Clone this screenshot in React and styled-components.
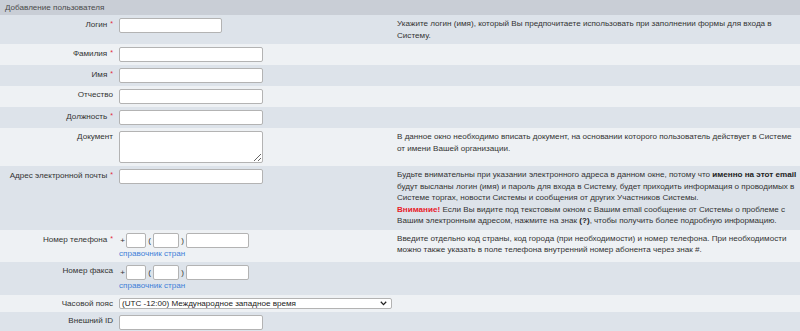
import React from 'react';
import styled, { createGlobalStyle } from 'styled-components';

const GlobalStyle = createGlobalStyle`
	html, body {
		margin: 0;
		padding: 0;
		background: #dde3ea;
	}
	body {
		font-family: "Liberation Sans", Arial, sans-serif;
		font-size: 8.1px;
		color: #333;
	}
`;

const Panel = styled.div`
	width: 800px;
	overflow: hidden;
`;

const Header = styled.div`
	height: 15px;
	line-height: 15px;
	padding-left: 5px;
	background: #c9ced6;
	color: #4a4a4a;
`;

const Row = styled.div`
	display: grid;
	grid-template-columns: 115px 278px 1fr;
	align-items: start;
	padding: 3px 0;
	background: ${(p) => (p.$dark ? '#dde3ea' : '#eef1f4')};
`;

const Label = styled.div`
	text-align: right;
	padding-right: 2px;
	line-height: 11.5px;
	color: #333;
	white-space: nowrap;
`;

const Req = styled.span`
	color: #e2293a;
	font-size: 7px;
	margin-left: 3px;
	vertical-align: 1px;
`;

const Field = styled.div`
	padding-left: 4px;
	display: flex;
	flex-direction: column;
	align-items: flex-start;
`;

const TextInput = styled.input`
	box-sizing: border-box;
	width: ${(p) => p.$w || 144}px;
	height: 15px;
	margin: 0;
	padding: 0 3px;
	border: 1px solid #b3b3b3;
	border-radius: 2px;
	background: #fff;
	font: inherit;
`;

const TextArea = styled.textarea`
	box-sizing: border-box;
	display: block;
	width: 144px;
	height: 32px;
	margin: 0;
	padding: 2px 3px;
	border: 1px solid #b3b3b3;
	border-radius: 2px;
	background: #fff;
	font: inherit;
`;

const Hint = styled.div`
	padding: 0 4px;
	line-height: 11.5px;
	color: #333;
	white-space: nowrap;
`;

const Strong = styled.b`
	color: #222;
`;

const Warn = styled.b`
	color: #e8202a;
`;

const PhoneGroup = styled.div`
	display: flex;
	align-items: center;
	height: 15px;
`;

const Sign = styled.span`
	width: 7px;
	text-align: center;
	color: #333;
`;

const RefLink = styled.a`
	color: #3f7fd8;
	text-decoration: none;
	line-height: 11.5px;
	cursor: pointer;
`;

const SelectWrap = styled.div`
	position: relative;
	width: 273px;
	height: 11px;
`;

const Select = styled.select`
	box-sizing: border-box;
	appearance: none;
	display: block;
	width: 100%;
	height: 11px;
	margin: 0;
	padding: 0 14px 0 2px;
	border: 1px solid #b3b3b3;
	border-radius: 2px;
	background: #fff;
	font: inherit;
	line-height: 9px;
	color: #222;
`;

const Chevron = styled.svg`
	position: absolute;
	right: 5px;
	top: 3px;
	pointer-events: none;
`;

const phoneBoxes = (
	<PhoneGroup>
		<Sign>+</Sign>
		<TextInput $w={20} />
		<Sign>(</Sign>
		<TextInput $w={26} />
		<Sign>)</Sign>
		<TextInput $w={63} />
	</PhoneGroup>
);

const App = () => {
	return (
		<Panel>
			<GlobalStyle />
			<Header>Добавление пользователя</Header>

			<Row $dark>
				<Label>Логин<Req>*</Req></Label>
				<Field>
					<TextInput $w={103} />
				</Field>
				<Hint>
					Укажите логин (имя), который Вы предпочитаете использовать при заполнении формы для входа в<br />
					Систему.
				</Hint>
			</Row>

			<Row>
				<Label>Фамилия<Req>*</Req></Label>
				<Field>
					<TextInput />
				</Field>
			</Row>

			<Row $dark>
				<Label>Имя<Req>*</Req></Label>
				<Field>
					<TextInput />
				</Field>
			</Row>

			<Row>
				<Label>Отчество</Label>
				<Field>
					<TextInput />
				</Field>
			</Row>

			<Row $dark>
				<Label>Должность<Req>*</Req></Label>
				<Field>
					<TextInput />
				</Field>
			</Row>

			<Row>
				<Label>Документ</Label>
				<Field>
					<TextArea />
				</Field>
				<Hint>
					В данное окно необходимо вписать документ, на основании которого пользователь действует в Системе<br />
					от имени Вашей организации.
				</Hint>
			</Row>

			<Row $dark>
				<Label>Адрес электронной почты<Req>*</Req></Label>
				<Field>
					<TextInput />
				</Field>
				<Hint>
					Будьте внимательны при указании электронного адреса в данном окне, потому что <Strong>именно на этот email</Strong><br />
					будут высланы логин (имя) и пароль для входа в Систему, будет приходить информация о проводимых в<br />
					Системе торгах, новости Системы и сообщения от других Участников Системы.<br />
					<Warn>Внимание!</Warn> Если Вы видите под текстовым окном с Вашим email сообщение от Системы о проблеме с<br />
					Вашим электронным адресом, нажмите на знак <Strong>(?)</Strong>, чтобы получить более подробную информацию.
				</Hint>
			</Row>

			<Row>
				<Label>Номер телефона<Req>*</Req></Label>
				<Field>
					{phoneBoxes}
					<RefLink>справочник стран</RefLink>
				</Field>
				<Hint>
					Введите отдельно код страны, код города (при необходимости) и номер телефона. При необходимости<br />
					можно также указать в поле телефона внутренний номер абонента через знак #.
				</Hint>
			</Row>

			<Row $dark>
				<Label>Номер факса</Label>
				<Field>
					{phoneBoxes}
					<RefLink>справочник стран</RefLink>
				</Field>
			</Row>

			<Row>
				<Label>Часовой пояс</Label>
				<Field>
					<SelectWrap>
						<Select defaultValue="-12">
							<option value="-12">(UTC -12:00) Международное западное время</option>
						</Select>
						<Chevron width="7" height="5" viewBox="0 0 7 5">
							<path d="M0.8 0.8 L3.5 3.6 L6.2 0.8" fill="none" stroke="#222" strokeWidth="1.3" />
						</Chevron>
					</SelectWrap>
				</Field>
			</Row>

			<Row $dark>
				<Label>Внешний ID</Label>
				<Field>
					<TextInput />
				</Field>
			</Row>
		</Panel>
	);
};

export default App;
